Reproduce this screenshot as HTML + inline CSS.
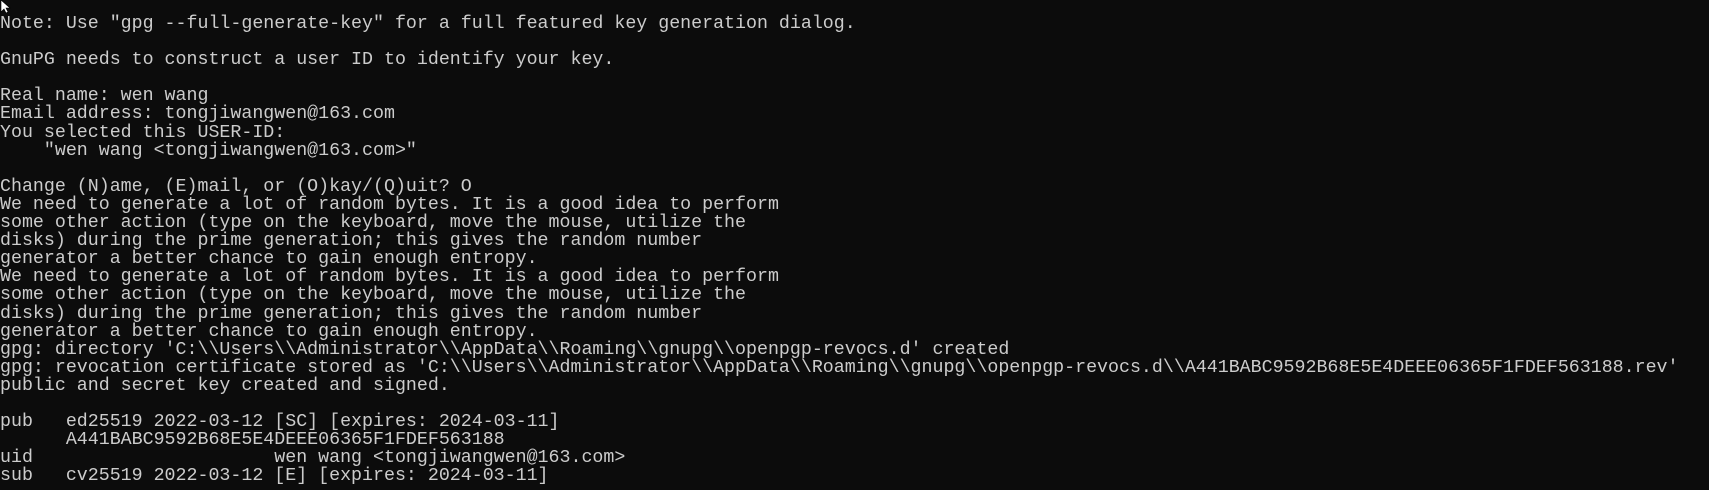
<!DOCTYPE html>
<html><head><meta charset="utf-8"><style>
html,body{margin:0;padding:0;background:#0c0c0c;width:1709px;height:490px;overflow:hidden}
pre{margin:0;position:absolute;left:0;top:15px;font-family:"Liberation Mono",monospace;font-size:18.3px;line-height:18.1px;color:#cccccc;white-space:pre}
svg{position:absolute;left:0;top:0}
</style></head><body>
<svg width="14" height="13" viewBox="0 0 14 13"><path d="M1 0 L1 12 L4 9 L6 13 L8 12 L6 8 L10 8 Z" fill="#fff" stroke="#000" stroke-width="0.6"/></svg>
<pre>Note: Use "gpg --full-generate-key" for a full featured key generation dialog.

GnuPG needs to construct a user ID to identify your key.

Real name: wen wang
Email address: tongjiwangwen@163.com
You selected this USER-ID:
    "wen wang &lt;tongjiwangwen@163.com&gt;"

Change (N)ame, (E)mail, or (O)kay/(Q)uit? O
We need to generate a lot of random bytes. It is a good idea to perform
some other action (type on the keyboard, move the mouse, utilize the
disks) during the prime generation; this gives the random number
generator a better chance to gain enough entropy.
We need to generate a lot of random bytes. It is a good idea to perform
some other action (type on the keyboard, move the mouse, utilize the
disks) during the prime generation; this gives the random number
generator a better chance to gain enough entropy.
gpg: directory 'C:\\Users\\Administrator\\AppData\\Roaming\\gnupg\\openpgp-revocs.d' created
gpg: revocation certificate stored as 'C:\\Users\\Administrator\\AppData\\Roaming\\gnupg\\openpgp-revocs.d\\A441BABC9592B68E5E4DEEE06365F1FDEF563188.rev'
public and secret key created and signed.

pub   ed25519 2022-03-12 [SC] [expires: 2024-03-11]
      A441BABC9592B68E5E4DEEE06365F1FDEF563188
uid                      wen wang &lt;tongjiwangwen@163.com&gt;
sub   cv25519 2022-03-12 [E] [expires: 2024-03-11]
</pre>
</body></html>
